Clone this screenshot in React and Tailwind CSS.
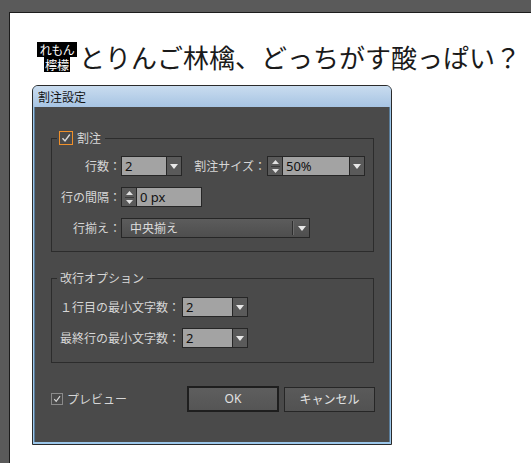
import React from 'react'

const jp = "font-['Noto_Sans_CJK_JP','Noto_Sans',sans-serif]"

function Tri() {
  return (
    <svg width="8" height="5" viewBox="0 0 8 5" className="block">
      <path d="M0 0 H8 L4 5 Z" fill="#e8e8e8" />
    </svg>
  )
}

function Spin() {
  return (
    <div className="w-[15px] shrink-0 bg-[#5a5a5a] border-r border-[#262626] flex flex-col items-center justify-center gap-[2px]">
      <svg width="7" height="4" viewBox="0 0 7 4" className="block">
        <path d="M0 4 H7 L3.5 0 Z" fill="#e0e0e0" />
      </svg>
      <div className="w-[9px] h-px bg-[#3a3a3a]" />
      <svg width="7" height="4" viewBox="0 0 7 4" className="block">
        <path d="M0 0 H7 L3.5 4 Z" fill="#e0e0e0" />
      </svg>
    </div>
  )
}

function Combo({ value, width, spin, drop = true }) {
  return (
    <div className="h-[20px] flex border border-[#262626] shrink-0" style={{ width }}>
      {spin && <Spin />}
      <div className="flex-1 bg-[#a3a3a3] text-[#111] text-[13px] leading-[18px] pl-[3px] font-['Noto_Sans',sans-serif]">{value}</div>
      {drop && (
        <div className="w-[15px] shrink-0 bg-[#5a5a5a] border-l border-[#262626] flex items-center justify-center">
          <Tri />
        </div>
      )}
    </div>
  )
}

function Check({ size, orange }) {
  return (
    <div
      className={`shrink-0 flex items-center justify-center bg-[#4a4a4a] border ${orange ? 'border-[#f0902a]' : 'border-[#8a8a8a]'}`}
      style={{ width: size, height: size }}
    >
      <svg width={size - 4} height={size - 4} viewBox="0 0 10 10" className="block">
        <path d="M1.5 5.2 L4 8 L8.8 1.5" fill="none" stroke="#d8d8d8" strokeWidth="1.4" />
      </svg>
    </div>
  )
}

function Label({ children, w }) {
  return (
    <div className="text-right shrink-0 text-[12px] leading-[20px] text-[#d6d6d6]" style={{ width: w }}>
      {children}
    </div>
  )
}

export default function App() {
  return (
    <div className={`w-[531px] h-[463px] bg-[#5a5a5a] pl-[9px] pt-[12px] overflow-hidden ${jp}`}>
      <div className="w-full h-full bg-white border-l border-t border-[#1c1c1c]">
        {/* heading with ruby */}
        <div className="flex items-end ml-[27px] mt-[29px] h-[30px]">
          <div className="flex flex-col items-center w-[40px] shrink-0">
            <div className="w-[40px] h-[15px] flex items-center justify-center bg-black text-white text-[12px] leading-[12px] tracking-[-0.5px]">れもん</div>
            <div className="h-[15px] flex items-center bg-black text-white text-[12px] leading-[12px] px-[1px]">檸檬</div>
          </div>
          <div className="ml-[2px] text-[26px] leading-[30px] text-[#1a1a1a] whitespace-nowrap">とりんご林檎、どっちがす酸っぱい？</div>
        </div>

        {/* dialog */}
        <div className="ml-[22px] mt-[13px] w-[360px] h-[360px] border border-[#2b2b2b] rounded-t-[6px] bg-[#9cc7ea] flex flex-col overflow-hidden">
          <div className="h-[21px] shrink-0 bg-gradient-to-b from-[#c9dcef] to-[#a7c4e3] text-[12px] leading-[21px] text-[#151515] pl-[5px]">
            割注設定
          </div>
          <div className="flex-1 mx-[1px] mb-[2px] bg-[#4a4a4a] border-x border-[#5a7c99] pt-[31px]">
            {/* group 1 */}
            <div className="relative ml-[16px] w-[323px] border border-[#2c2c2c] pt-[17px] pb-[13px] flex flex-col gap-[11px]">
              <div className="absolute left-[5px] -top-[8px] bg-[#4a4a4a] pl-[2px] pr-[4px] flex items-center gap-[4px] h-[14px]">
                <Check size={14} orange />
                <span className="text-[12px] leading-[14px] text-[#d6d6d6]">割注</span>
              </div>
              <div className="flex items-center">
                <Label w={69}>行数：</Label>
                <Combo value="2" width={61} />
                <div className="w-[12px]" />
                <Label w={72}>割注サイズ：</Label>
                <div className="w-px" />
                <Combo value="50%" width={98} spin />
              </div>
              <div className="flex items-center">
                <Label w={69}>行の間隔：</Label>
                <Combo value="0 px" width={81} spin drop={false} />
              </div>
              <div className="flex items-center">
                <Label w={69}>行揃え：</Label>
                <div className="w-[189px] h-[20px] border border-[#262626] bg-gradient-to-b from-[#5c5c5c] to-[#4e4e4e] flex items-center">
                  <span className="flex-1 pl-[8px] text-[12px] leading-[18px] text-[#dcdcdc]">中央揃え</span>
                  <div className="w-px h-[14px] bg-[#2e2e2e]" />
                  <div className="w-px h-[14px] bg-[#6a6a6a]" />
                  <div className="w-[15px] flex items-center justify-center">
                    <Tri />
                  </div>
                </div>
              </div>
            </div>

            {/* group 2 */}
            <div className="relative ml-[16px] mt-[26px] w-[323px] border border-[#2c2c2c] pt-[18px] pb-[14px] pl-[8px] flex flex-col gap-[11px]">
              <div className="absolute left-[5px] -top-[8px] bg-[#4a4a4a] px-[3px] h-[14px] text-[12px] leading-[14px] text-[#d6d6d6]">
                改行オプション
              </div>
              <div className="flex items-center">
                <div className="w-[122px] shrink-0 text-[12px] leading-[20px] text-[#d6d6d6]">１行目の最小文字数：</div>
                <Combo value="2" width={66} />
              </div>
              <div className="flex items-center">
                <div className="w-[122px] shrink-0 text-[12px] leading-[20px] text-[#d6d6d6]">最終行の最小文字数：</div>
                <Combo value="2" width={66} />
              </div>
            </div>

            {/* bottom */}
            <div className="flex items-center ml-[16px] mt-[23px]">
              <Check size={12} />
              <span className="ml-[4px] w-[120px] text-[12px] leading-[20px] text-[#d6d6d6]">プレビュー</span>
              <button className="w-[92px] h-[26px] border-2 border-[#1e1e1e] bg-gradient-to-b from-[#5e5e5e] to-[#555] text-[12px] text-[#e2e2e2] font-['Noto_Sans',sans-serif]">
                OK
              </button>
              <button className="ml-[5px] w-[91px] h-[25px] border border-[#262626] bg-gradient-to-b from-[#5a5a5a] to-[#525252] text-[12px] text-[#e2e2e2]">
                キャンセル
              </button>
            </div>
          </div>
        </div>
      </div>
    </div>
  )
}
